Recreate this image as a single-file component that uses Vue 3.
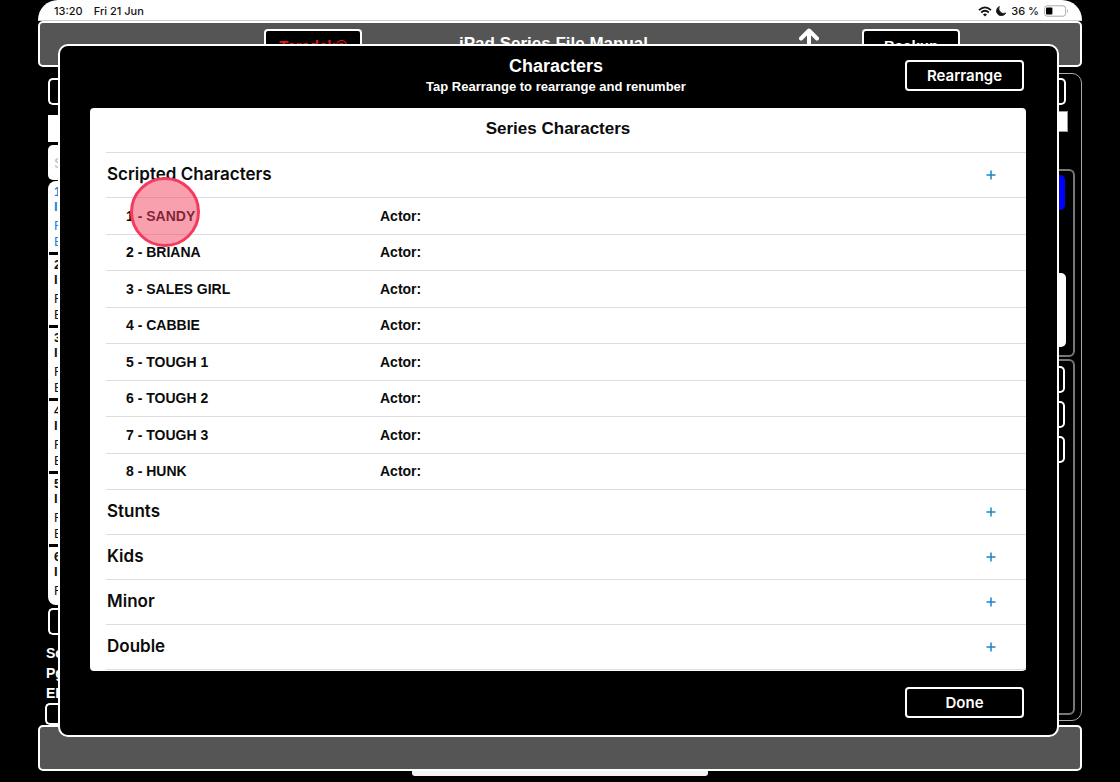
<script setup>
const characters = ['SANDY', 'BRIANA', 'SALES GIRL', 'CABBIE', 'TOUGH 1', 'TOUGH 2', 'TOUGH 3', 'HUNK']
const groups = ['Stunts', 'Kids', 'Minor', 'Double']
const scenes = [1, 2, 3, 4, 5, 6]
</script>

<template>
  <div class="device">
    <header class="status">
      <span>13:20</span>
      <span class="date">Fri 21 Jun</span>
      <svg class="wifi" viewBox="0 0 14 11" aria-hidden="true">
        <path d="M1 4.2 Q7 -1.4 13 4.2" />
        <path d="M3.2 6.5 Q7 3 10.8 6.5" />
        <path class="dot" d="M5 8.4 Q7 6.8 9 8.4 L7 10.6 Z" />
      </svg>
      <svg class="moon" viewBox="0 0 10 10" aria-hidden="true">
        <path d="M3.4 .4 A4.9 4.9 0 1 0 9.8 7 A4.9 4.9 0 0 1 3.4 .4 Z" />
      </svg>
      <span>36 %</span>
      <svg class="battery" viewBox="0 0 25 12" aria-hidden="true">
        <rect x=".6" y=".8" width="21" height="10.4" rx="2.6" />
        <rect class="charge" x="2" y="2.4" width="6.4" height="7.2" rx="1" />
        <path class="cap" d="M23 4.2 Q25 6 23 7.8 Z" />
      </svg>
    </header>

    <nav class="bar top">
      <button class="btn small red">Teradek®</button>
      <h1>iPad Series File Manual</h1>
      <button class="arrow" aria-label="Up">
        <svg viewBox="0 0 20 28" aria-hidden="true"><path d="M10 27 V3 M2 10.5 L10 2.5 L18 10.5" /></svg>
      </button>
      <button class="btn small">Backup</button>
    </nav>

    <main class="body">
      <aside class="left">
        <button class="btn stub" aria-label="Menu"></button>
        <div class="block"></div>
        <input class="search" type="text" placeholder="S" aria-label="Search" />
        <ul class="scenes">
          <li v-for="n in scenes" :key="n">
            <b>{{ n }}</b><b>I</b><span class="gap">F</span><span v-if="n < scenes.length">E</span>
          </li>
        </ul>
        <button class="btn stub" aria-label="Add"></button>
        <div class="labels"><span>Sc</span><span>Pg</span><span>EP</span></div>
        <button class="btn stub last" aria-label="Info"></button>
      </aside>
      <aside class="right">
        <button class="btn stub" aria-label="Options"></button>
        <input class="field" type="text" aria-label="Field" />
        <section class="card first">
          <div class="blue"></div>
          <div class="note"></div>
        </section>
        <section class="card second">
          <button class="btn stub" aria-label="Option one"></button>
          <button class="btn stub" aria-label="Option two"></button>
          <button class="btn stub" aria-label="Option three"></button>
        </section>
      </aside>
    </main>

    <div class="bar bottom"></div>
    <div class="home"></div>

    <div class="modal" role="dialog" aria-labelledby="title">
      <div class="head">
        <div class="titles">
          <h2 id="title">Characters</h2>
          <p>Tap Rearrange to rearrange and renumber</p>
        </div>
        <button class="btn action">Rearrange</button>
      </div>

      <div class="list">
        <h3>Series Characters</h3>
        <div class="group">
          <h4>Scripted Characters</h4>
          <button class="plus" aria-label="Add Scripted Characters">
            <svg viewBox="0 0 10 10" aria-hidden="true"><path d="M5 .5 V9.5 M.5 5 H9.5" /></svg>
          </button>
        </div>
        <ul class="rows">
          <li v-for="(name, i) in characters" :key="name">
            <span class="name">{{ i + 1 }} - {{ name }}</span>
            <span>Actor:</span>
          </li>
        </ul>
        <div v-for="g in groups" :key="g" class="group">
          <h4>{{ g }}</h4>
          <button class="plus" :aria-label="'Add ' + g">
            <svg viewBox="0 0 10 10" aria-hidden="true"><path d="M5 .5 V9.5 M.5 5 H9.5" /></svg>
          </button>
        </div>
        <div class="end"></div>
        <div class="touch"></div>
      </div>

      <div class="foot">
        <button class="btn action">Done</button>
      </div>
    </div>
  </div>
</template>

<style>
body { background: #000; }
</style>

<style scoped>
* { box-sizing: border-box; margin: 0; padding: 0; }
.device {
  position: relative;
  display: flex;
  flex-direction: column;
  min-height: 100vh;
  margin: 0 38px;
  font-family: "Liberation Sans", Arial, sans-serif;
  color: #fff;
}
ul { list-style: none; }
button { font: inherit; color: inherit; background: none; border: 0; }
.btn {
  font-weight: 700;
  background: #000;
  border: 2px solid #fff;
  border-radius: 4px;
}
.status {
  display: flex;
  align-items: center;
  height: 21px;
  padding: 2px 13px 0 16px;
  background: #fff;
  border-bottom: 1px solid #ccc;
  border-radius: 20px 20px 0 0;
  color: #111;
  font: 500 11px/18px Inter, sans-serif;
}
.date { margin-left: 11px; }
.wifi { width: 14px; height: 11px; margin-left: auto; fill: none; stroke: #111; stroke-width: 1.7; }
.wifi .dot { fill: #111; stroke: none; }
.moon { width: 10px; height: 10px; margin: 0 5px 0 4px; fill: #111; stroke: #111; stroke-width: .7; stroke-linejoin: round; }
.battery { width: 25px; height: 12px; margin-left: 5px; fill: none; stroke: #aaa; }
.battery .charge { fill: #000; stroke: none; }
.battery .cap { fill: #aaa; stroke: none; }

.bar { background: #555; border: 2px solid #fff; border-radius: 5px; }
.top { display: flex; align-items: center; height: 46px; padding: 0 120px 0 224px; }
.small { width: 98px; height: 30px; padding-top: 2px; font-size: 15px; }
.red { color: #e01818; }
h1 { flex: 1; text-align: center; font-size: 17px; line-height: 22px; }
.arrow { width: 117px; height: 32px; padding-left: 54px; text-align: left; }
.arrow svg { width: 20px; height: 28px; fill: none; stroke: #fff; stroke-width: 4; stroke-linecap: round; stroke-linejoin: round; }
.bottom { height: 46px; }
.home { width: 296px; height: 5px; margin: 0 auto 6px; background: #f4f4f2; border-radius: 0 0 3px 3px; }

.body { flex: 1; display: flex; justify-content: space-between; }
.left { width: 60px; padding: 11px 0 0 10px; display: flex; flex-direction: column; }
.stub { flex: none; height: 27px; border-right: 0; border-radius: 5px 0 0 5px; }
.block { height: 27px; margin: 10px 0 3px; background: #fff; }
.search { width: 50px; height: 35px; padding-left: 6px; border: 0; border-radius: 5px; background: #fff; font: 15px "Liberation Sans", Arial, sans-serif; }
.search::placeholder { color: #bbb; }
.scenes { height: 424px; margin: 1px 0 3px; padding-top: 1px; overflow: hidden; background: #fff; border-radius: 8px; color: #111; font-size: 13px; line-height: 16px; }
.scenes li { height: 73px; padding: 2px 0 0 5px; margin-left: 1px; border-bottom: 3px solid #000; }
.scenes li:last-child { border-bottom: 0; }
.scenes li > * { display: block; }
.scenes .gap { margin-top: 4px; }
.scenes b { line-height: 15px; }
.scenes li:first-child { color: #1a84d8; }
.labels { margin: 8px 0 0 -2px; font-weight: 700; font-size: 14px; line-height: 20px; }
.labels span { display: block; }
.last { height: 22px; margin-left: -3px; }

.right {
  width: 60px;
  margin: 6px 0 4px;
  padding-top: 4px;
  display: flex;
  flex-direction: column;
  border: 1px solid #aaa;
  border-radius: 10px;
}
.right .stub { border: 2px solid #fff; border-left: 0; border-radius: 0 5px 5px 0; }
.right > .stub { margin-right: 15px; }
.field { width: 45px; height: 21px; margin: 6px 0 0; background: #fff; border: 1px solid #999; }
.card { margin-right: 6px; border: 2px solid #777; border-radius: 6px; }
.first { height: 188px; margin-top: 37px; padding-top: 4px; }
.blue { height: 35px; margin-right: 8px; background: #00f; border-radius: 5px; }
.note { height: 74px; margin: 63px 7px 0 0; background: #fff; border-radius: 5px; }
.second { flex: 1; margin-top: 2px; margin-bottom: 5px; padding-top: 5px; display: flex; flex-direction: column; gap: 8px; }
.second .stub { margin-right: 8px; }

.modal {
  position: absolute;
  inset: 44px 23px 45px 20px;
  display: flex;
  flex-direction: column;
  padding: 0 31px 0 30px;
  background: #000;
  border: 2px solid #fff;
  border-radius: 10px;
}
.head { position: relative; height: 62px; padding-top: 9px; }
.titles { padding-right: 4px; text-align: center; }
h2 { font-size: 18px; line-height: 22px; }
.titles p { font-size: 13px; font-weight: 700; line-height: 19px; }
.action { width: 119px; height: 31px; font: 600 15px/20px Inter, sans-serif; }
.head .action { position: absolute; top: 14px; right: 2px; }
.foot { display: flex; justify-content: flex-end; padding: 16px 2px 17px 0; }

.list {
  position: relative;
  flex: 1;
  display: flex;
  flex-direction: column;
  padding-left: 16px;
  background: #fff;
  border-radius: 4px;
  color: #0b0b0b;
}
h3 { height: 44px; padding-right: 16px; text-align: center; font-size: 17px; line-height: 42px; }
.group { display: flex; align-items: center; justify-content: space-between; height: 45px; padding: 0 30px 0 1px; border-top: 1px solid #ddd; }
h4 { padding-bottom: 2px; font: 600 17px/22px Inter, sans-serif; }
.plus { width: 10px; height: 10px; line-height: 0; }
.plus svg { width: 10px; height: 10px; fill: none; stroke: #1b84c7; stroke-width: 1.5; }
.rows { flex: 1; display: flex; flex-direction: column; }
.rows li { flex: 1; display: flex; align-items: center; padding-left: 20px; border-top: 1px solid #ddd; font-size: 14px; font-weight: 700; line-height: 18px; }
.name { width: 254px; }
.end { height: 2px; border-top: 1px solid #ddd; }
.touch {
  position: absolute;
  left: 40px;
  top: 69px;
  width: 70px;
  height: 70px;
  border: 3px solid #f43b5e;
  border-radius: 50%;
  background: rgba(243, 65, 95, .5);
}
</style>
